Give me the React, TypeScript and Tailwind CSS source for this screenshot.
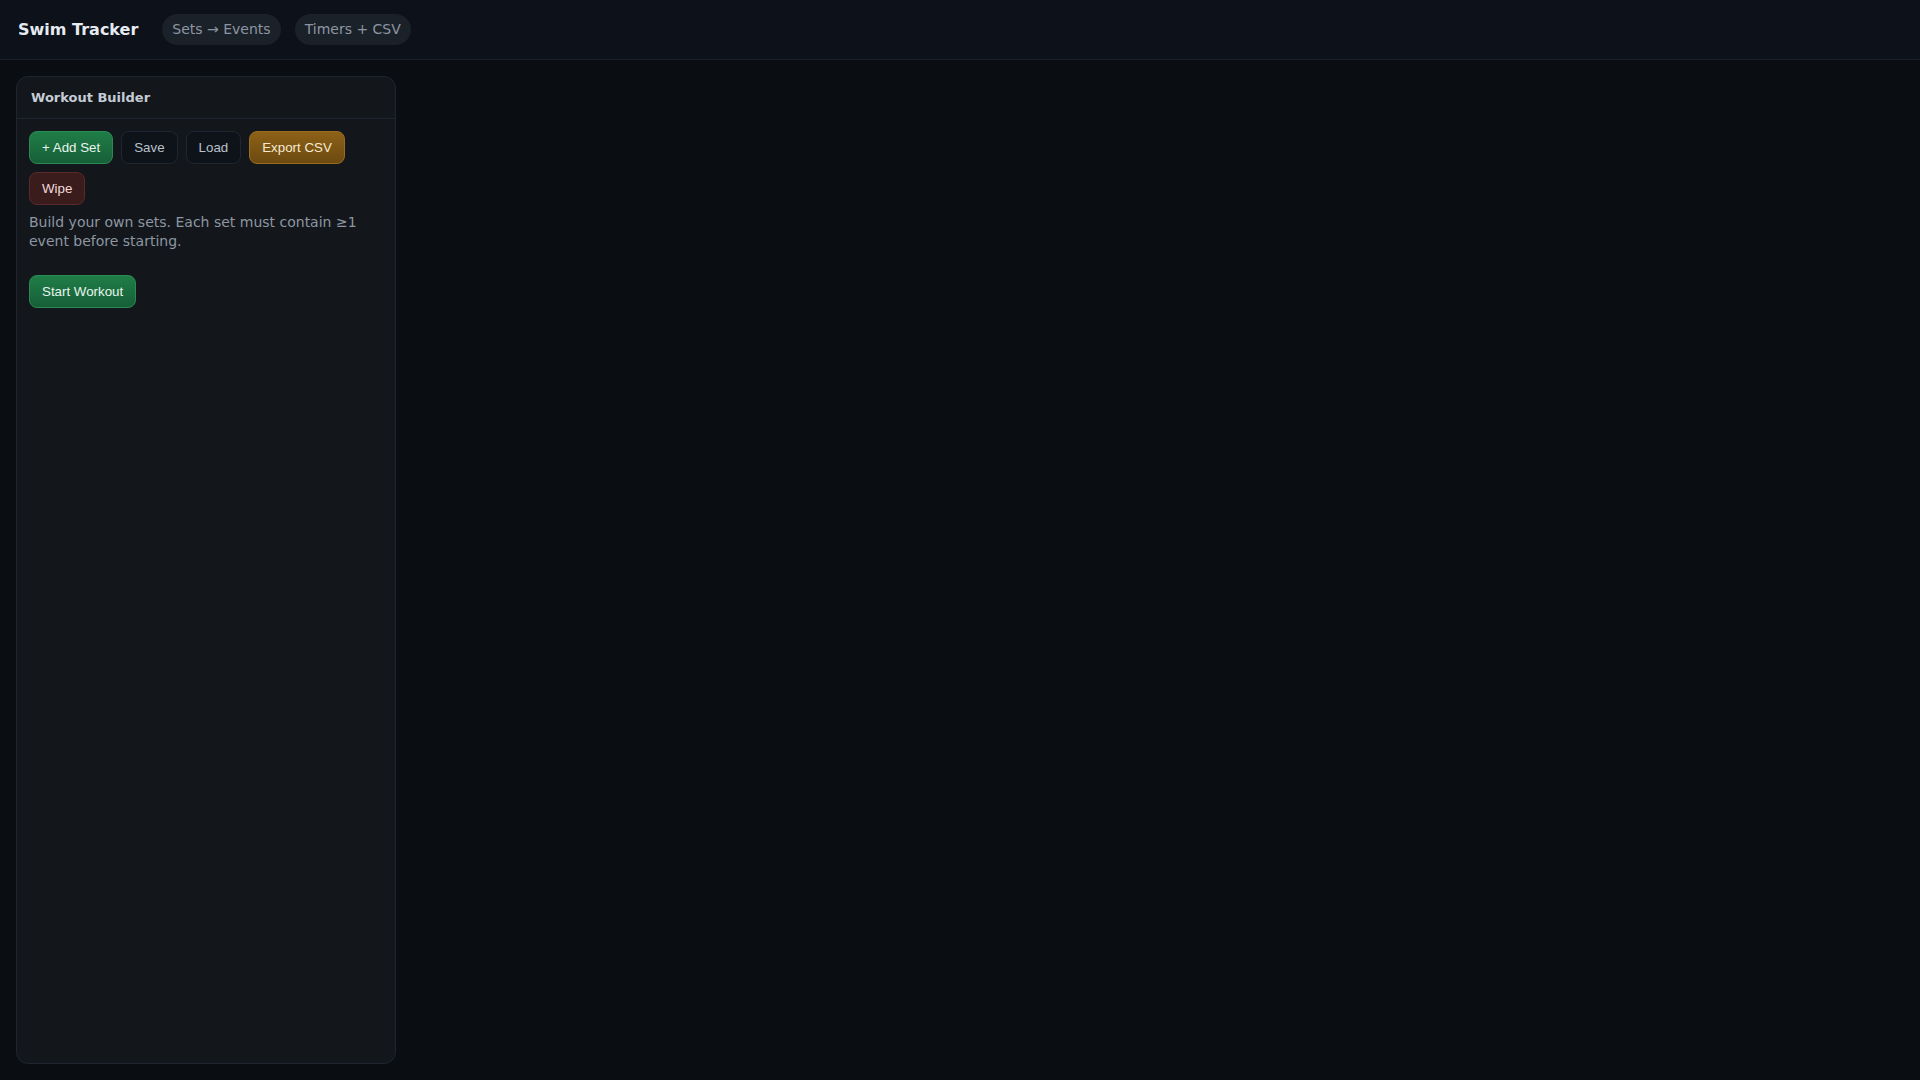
const SANS = "font-['DejaVu_Sans',sans-serif]";
const BTN = "font-['Liberation_Sans',Arial,sans-serif] text-[13.333px] leading-[15px] px-3 py-2 rounded-lg border";

const VARIANTS: Record<string, string> = {
  green: "bg-gradient-to-b from-[#1f7d47] to-[#175f38] border-[#2a8a53] text-[#e8f5ec]",
  ghost: "bg-[#0e131a] border-[#1f2631] text-[#b9c1cc]",
  amber: "bg-gradient-to-b from-[#8d6117] to-[#6c4a10] border-[#9a6c1e] text-[#f6ead2]",
  red: "bg-[#3a1c1d] border-[#5a2a2b] text-[#f1dada]",
};

function Btn({ label, variant }: { label: string; variant: string }) {
  return <button className={`${BTN} ${VARIANTS[variant]}`}>{label}</button>;
}

function Pill({ label }: { label: string }) {
  return (
    <span className="h-[31px] flex items-center px-[10px] rounded-full bg-[#1b2129] text-[14px] text-[#8c96a3]">
      {label}
    </span>
  );
}

export default function App() {
  return (
    <div className={`${SANS} min-h-screen h-screen flex flex-col bg-[#0a0e12]`}>
      {/* top bar */}
      <header className="h-[60px] shrink-0 flex items-center px-[18px] gap-[24px] bg-[#0c111a] border-b border-[#1c222b]">
        <h1 className="text-[16px] font-bold text-[#e6ebf1]">Swim Tracker</h1>
        <div className="flex items-center gap-[14px]">
          <Pill label="Sets → Events" />
          <Pill label="Timers + CSV" />
        </div>
      </header>

      <main className="flex-1 min-h-0 p-4">
        <section className="w-[380px] h-full rounded-xl border border-[#1f252e] bg-[#13171c] flex flex-col">
          <div className="h-[42px] shrink-0 flex items-center px-[14px] border-b border-[#1f252e]">
            <span className="text-[13px] font-bold text-[#c5ccd5]">Workout Builder</span>
          </div>

          <div className="px-3 pt-3 flex flex-col">
            <div className="flex flex-wrap gap-2">
              <Btn label="+ Add Set" variant="green" />
              <Btn label="Save" variant="ghost" />
              <Btn label="Load" variant="ghost" />
              <Btn label="Export CSV" variant="amber" />
              <Btn label="Wipe" variant="red" />
            </div>

            <p className="mt-2 text-[14px] leading-[19px] text-[#8d96a1]">
              Build your own sets. Each set must contain ≥1 event before starting.
            </p>

            <div className="mt-6">
              <Btn label="Start Workout" variant="green" />
            </div>
          </div>
        </section>
      </main>
    </div>
  );
}
